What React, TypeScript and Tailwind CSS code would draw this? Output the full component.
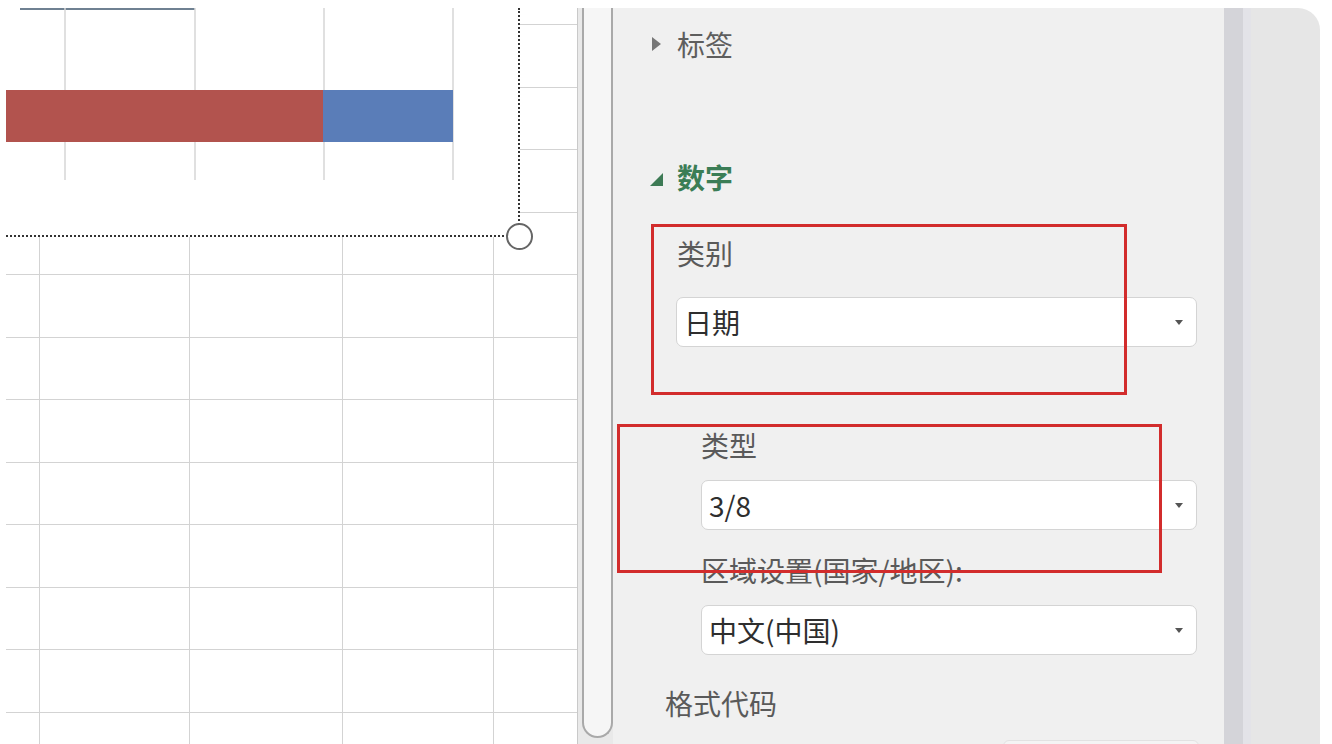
import { FC } from "react";

const ROW_H = [
  "h-[17px]",
  "h-[62.5px]", "h-[62.5px]", "h-[62.5px]", "h-[62.5px]", "h-[62.5px]", "h-[62.5px]",
  "h-[62.5px]", "h-[62.5px]", "h-[62.5px]", "h-[62.5px]", "h-[62.5px]", "h-[62.5px]",
];
const COL_W = ["w-[34px]", "w-[150px]", "w-[153px]", "w-[151px]", "w-[84px]"];

const ChartObject: FC = () => {
  return (
    <div className="absolute left-0 top-0 w-[514px] h-[229px] bg-white border-r-2 border-b-2 border-dotted border-[#333]">
      <svg width="512" height="227" className="block">
        <line x1="14" y1="1" x2="189" y2="1" stroke="#6f8192" strokeWidth="2" />
        {[59, 189, 318, 447].map((x) => (
          <line key={x} x1={x} y1="0" x2={x} y2="172" stroke="#d6d6d6" strokeWidth="1.5" />
        ))}
        <rect x="0" y="82" width="317" height="52" fill="#b2534e" />
        <rect x="317" y="82" width="130" height="52" fill="#5a7db8" />
      </svg>
    </div>
  );
};

const Sheet: FC = () => {
  return (
    <div className="relative w-[572px] shrink-0 bg-white overflow-hidden border-r border-[#c9c9c9]">
      <div className="flex flex-col">
        {ROW_H.map((h, r) => (
          <div key={r} className={`flex shrink-0 ${h}`}>
            {COL_W.map((w, c) => (
              <div key={c} className={`${w} shrink-0 border-r border-b border-[#d3d3d3]`}></div>
            ))}
          </div>
        ))}
      </div>
      <ChartObject />
      <div className="absolute left-[500px] top-[215px] w-[27px] h-[27px] rounded-full bg-white border-2 border-[#666]"></div>
    </div>
  );
};

const Dropdown: FC<{ value: string; className: string }> = ({ value, className }) => {
  return (
    <div
      className={`${className} h-[50px] shrink-0 flex items-center bg-white border border-[#d4d4d4] rounded-[7px] pl-[7px] pr-[13px]`}
    >
      <span className="flex-1 text-[28px] text-[#2e2e2e] leading-none">{value}</span>
      <div className="w-0 h-0 border-l-[4px] border-r-[4px] border-t-[5px] border-l-transparent border-r-transparent border-t-[#555]"></div>
    </div>
  );
};

const Label: FC<{ text: string; className: string }> = ({ text, className }) => {
  return (
    <div className={`${className} h-[40px] shrink-0 flex items-center`}>
      <span className="text-[28px] text-[#5a5a5a] leading-none">{text}</span>
    </div>
  );
};

const FormatPane: FC = () => {
  return (
    <div className="relative w-[611px] shrink-0 bg-[#f0f0f0] flex flex-col">
      <div className="h-[72px] shrink-0 flex items-center pl-[39px] gap-[16px]">
        <div className="w-0 h-0 border-t-[7px] border-b-[7px] border-l-[9px] border-t-transparent border-b-transparent border-l-[#777]"></div>
        <span className="text-[28px] text-[#5e5e5e] leading-none">标签</span>
      </div>

      <div className="mt-[72px] h-[50px] shrink-0 flex items-center pl-[37px] gap-[14px]">
        <svg width="13" height="13" viewBox="0 0 13 13" className="mt-[5px]">
          <polygon points="13,0 13,13 0,13" fill="#3d7a55" />
        </svg>
        <span className="text-[28px] text-[#3b7d56] font-semibold leading-none">数字</span>
      </div>

      <Label text="类别" className="mt-[31px] pl-[64px]" />
      <Dropdown value="日期" className="mt-[24px] ml-[63px] w-[521px]" />

      <Label text="类型" className="mt-[78px] pl-[88px]" />
      <Dropdown value="3/8" className="mt-[15px] ml-[88px] w-[496px]" />

      <Label text="区域设置(国家/地区):" className="mt-[20px] pl-[88px]" />
      <Dropdown value="中文(中国)" className="mt-[15px] ml-[88px] w-[496px]" />

      <Label text="格式代码" className="mt-[28px] pl-[52px]" />
      <div className="mt-[17px] ml-[390px] w-[196px] h-[40px] shrink-0 rounded-[6px] border border-[#e2e2e2] bg-[#f4f4f4]"></div>

      {/* annotation boxes */}
      <div className="absolute left-[38px] top-[216px] w-[476px] h-[171px] border-[3px] border-[#d22c2c]"></div>
      <div className="absolute left-[4px] top-[416px] w-[545px] h-[149px] border-[3px] border-[#d22c2c]"></div>
    </div>
  );
};

export default function App() {
  return (
    <div className="w-[1332px] h-[744px] bg-white pt-[8px] pl-[6px] pr-[12px] overflow-hidden font-['Microsoft_YaHei','Noto_Sans_CJK_SC','Noto_Sans',sans-serif]">
      <div className="flex h-[780px] rounded-tl-[14px] rounded-tr-[22px] overflow-hidden">
        <Sheet />
        <div className="w-[35px] shrink-0 bg-[#e9e9e9]">
          <div className="ml-[4px] w-[31px] h-[730px] border-x-2 border-b-2 border-[#a9a9a9] rounded-b-[16px] bg-[#f6f6f6]"></div>
        </div>
        <FormatPane />
        <div className="flex flex-1">
          <div className="w-[19px] bg-[#d4d4d9]"></div>
          <div className="w-[8px] bg-[#e3e3e8]"></div>
          <div className="flex-1 bg-[#e6e6e6]"></div>
        </div>
      </div>
    </div>
  );
}
